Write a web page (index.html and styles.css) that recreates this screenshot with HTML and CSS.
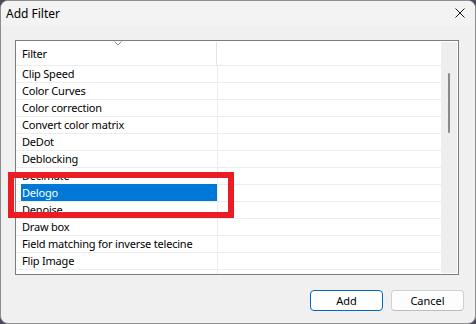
FILE: index.html
```html
<!DOCTYPE html>
<html lang="en">
<head>
    <meta charset="UTF-8">
    <title>Add Filter</title>
    <link rel="stylesheet" href="styles.css">
</head>
<body>

<div class="window">
    <div class="titlebar">
        <span class="title">Add Filter</span>
        <svg class="close" width="10" height="10" viewBox="0 0 10 10">
            <path d="M0.5 0.5L9.5 9.5M9.5 0.5L0.5 9.5" stroke="#1b1b1b" stroke-width="1"/>
        </svg>
    </div>
    <div class="dialog">
        <div class="list">
            <div class="table">
                <div class="header">
                    <div class="col-name">Filter</div>
                    <svg class="sort" width="8" height="5" viewBox="0 0 8 5">
                        <path d="M0.5 0.5L4 4L7.5 0.5" fill="none" stroke="#8c8c8c" stroke-width="1"/>
                    </svg>
                </div>
                <div id="rows"></div>
            </div>
            <div class="scrollbar">
                <div class="thumb"></div>
            </div>
        </div>
        <div class="buttons">
            <button class="primary">Add</button>
            <button>Cancel</button>
        </div>
    </div>
    <div class="highlight"></div>
</div>

<script>
    const filters = [
        "Clip Speed",
        "Color Curves",
        "Color correction",
        "Convert color matrix",
        "DeDot",
        "Deblocking",
        "Decimate",
        "Delogo",
        "Denoise",
        "Draw box",
        "Field matching for inverse telecine",
        "Flip Image",
        "Frame rate"
    ];
    const selected = "Delogo";

    const rowsContainer = document.getElementById('rows');
    filters.forEach(name => {
        const row = document.createElement('div');
        row.className = 'row';
        const cell = document.createElement('div');
        cell.className = 'cell';
        const label = document.createElement('span');
        label.className = name === selected ? 'label selected' : 'label';
        label.innerText = name;
        cell.appendChild(label);
        row.appendChild(cell);
        row.appendChild(document.createElement('div'));
        rowsContainer.appendChild(row);
    });
</script>

</body>
</html>
```

FILE: styles.css
```css
body {
    margin: 0;
    background-color: #4b4a5c;
    font-family: "Noto Sans", "Open Sans", sans-serif;
    font-size: 11px;
    color: #000;
}
.window {
    position: relative;
    width: 476px;
    height: 324px;
    box-sizing: border-box;
    border: 1px solid #8e8e8e;
    border-radius: 8px;
    background-color: #f0f0f0;
    overflow: hidden;
    display: flex;
    flex-direction: column;
}
.titlebar {
    height: 25px;
    flex: none;
    display: flex;
    align-items: center;
    justify-content: space-between;
    padding: 0 10px 0 5px;
    background-color: #f3f3f3;
}
.title {
    font-size: 12px;
    color: #000;
}
.close {
    margin-top: -1px;
}
.dialog {
    padding: 14px 11px 0 14px;
}
.list {
    height: 235px;
    box-sizing: border-box;
    margin-right: 5px;
    border: 1px solid #7d7d7d;
    background-color: #fff;
    display: flex;
    letter-spacing: -0.2px;
}
.table {
    flex: 1;
    overflow: hidden;
}
.header {
    position: relative;
    height: 24px;
    display: flex;
    align-items: center;
    border-bottom: 1px solid #ececec;
}
.col-name {
    width: 194px;
    height: 23px;
    line-height: 23px;
    padding-left: 6px;
    border-right: 1px solid #e3e3e3;
}
.sort {
    position: absolute;
    left: 98px;
    top: 0;
}
.row {
    display: flex;
    height: 16px;
    border-bottom: 1px solid #ededed;
}
.row div:last-child {
    flex: 1;
}
.cell {
    width: 202px;
    padding-left: 5px;
    box-sizing: border-box;
    border-right: 1px solid #ececec;
    display: flex;
}
.label {
    flex: 1;
    padding-left: 1px;
    line-height: 16px;
    white-space: nowrap;
}
.label.selected {
    background-color: #0078d7;
    color: #fff;
    margin-top: -1px;
    line-height: 17px;
}
.scrollbar {
    width: 16px;
    margin: 1px 1px 1px 0;
    background-color: #eeeeee;
    display: flex;
    justify-content: center;
    padding-top: 31px;
    box-sizing: border-box;
}
.thumb {
    width: 2px;
    height: 60px;
    border-radius: 1px;
    background-color: #8a8a8a;
}
.buttons {
    display: flex;
    justify-content: flex-end;
    gap: 8px;
    margin-top: 15px;
}
button {
    width: 73px;
    height: 21px;
    padding: 0;
    border: 1px solid #d0d0d0;
    border-bottom-color: #bdbdbd;
    border-radius: 4px;
    background-color: #fdfdfd;
    font-family: "Noto Sans", "Open Sans", sans-serif;
    font-size: 11px;
    color: #000;
}
button.primary {
    border: 1px solid #0067c0;
    background-color: #fff;
}
.highlight {
    position: absolute;
    left: 7px;
    top: 171px;
    width: 226px;
    height: 46px;
    box-sizing: border-box;
    border: 6px solid #ec1c24;
}
```
